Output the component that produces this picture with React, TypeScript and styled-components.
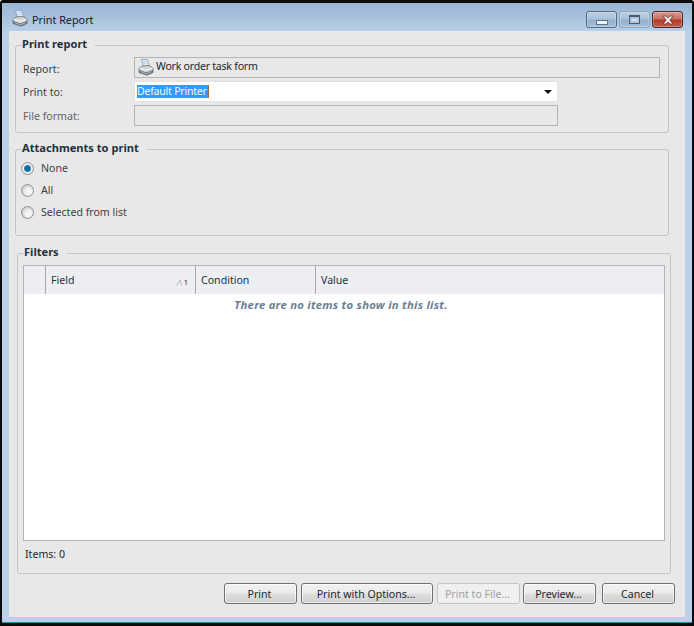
import React from 'react';
import styled, { createGlobalStyle } from 'styled-components';

const Reset = createGlobalStyle`
  html, body {
    margin: 0;
    padding: 0;
    background: #ffffff;
  }
  * { box-sizing: border-box; }
`;

const font = `"Noto Sans", "DejaVu Sans", sans-serif`;

// Window chrome

const WindowFrame = styled.div`
  width: 694px;
  height: 626px;
  border: 2px solid #0a0a0a;
  border-top-width: 3px;
  border-bottom-width: 3px;
  border-radius: 3px 3px 0 0;
  background: #b9d1ea;
  box-shadow: inset 0 -1px 0 #2b8c9c;
  display: flex;
  flex-direction: column;
  font-family: ${font};
  font-size: 10.6px;
  color: #1c2733;
  overflow: hidden;
`;

const TitleBar = styled.header`
  height: 28px;
  flex: none;
  display: flex;
  align-items: center;
  padding: 3px 9px 0 10px;
  background: linear-gradient(180deg, #9ab6d3 0%, #a9c3de 55%, #b7d0e9 100%);
`;

const TitleText = styled.span`
  margin-left: 4px;
  padding-top: 1px;
  font-size: 10.8px;
  color: #10181f;
`;

const CaptionButtons = styled.div`
  margin-left: auto;
  margin-top: 2px;
  display: flex;
  gap: 2px;
`;

const CaptionButton = styled.div<{ $close?: boolean; $faded?: boolean }>`
  width: 31px;
  height: 17px;
  display: flex;
  align-items: center;
  justify-content: center;
  border: 1px solid ${p => (p.$close ? '#4f2a2a' : p.$faded ? '#8ea5bd' : '#55687f')};
  border-radius: 3px;
  box-shadow: inset 0 0 0 1px rgba(255, 255, 255, 0.25);
  background: ${p =>
    p.$close
      ? 'linear-gradient(180deg, #d89a8f 0%, #c8705f 45%, #ae3a2a 55%, #c4604f 100%)'
      : 'linear-gradient(180deg, #bccfe2 0%, #a9c2db 45%, #94b0cd 55%, #a5bfd9 100%)'};
`;

const MinGlyph = styled.div`
  width: 12px;
  height: 5px;
  margin-top: 5px;
  background: #eef3f8;
  border: 1px solid #5f7288;
`;

const MaxGlyph = styled.div`
  width: 11px;
  height: 9px;
  border: 1px solid #4a5a6c;
  border-top-width: 2px;
  background: #b0c6dc;
  display: flex;
  align-items: center;
  justify-content: center;
  &::after {
    content: '';
    width: 5px;
    height: 2px;
    background: #d6e1ec;
  }
`;

const ClientArea = styled.main`
  width: 676px;
  height: 586px;
  margin-left: 7px;
  background: #e8e8e8;
  display: flex;
  flex-direction: column;
`;

// Group boxes

const Group = styled.fieldset<{ $height: number; $top: number; $left?: number }>`
  width: 654px;
  height: ${p => p.$height}px;
  margin: ${p => p.$top}px 0 0 ${p => p.$left ?? 6}px;
  padding: 0 0 0 6px;
  border: 1px solid #c4c4c4;
  border-radius: 3px;
  min-width: 0;
  display: flex;
  flex-direction: column;
`;

const GroupTitle = styled.legend`
  padding: 0 8px 2px 0;
  margin-left: 0;
  font-size: 11.1px;
  line-height: 12px;
  font-weight: 700;
  color: #243240;
`;

const FormRow = styled.div<{ $top: number }>`
  display: flex;
  align-items: center;
  margin-top: ${p => p.$top}px;
  height: 21px;
`;

const FieldLabel = styled.label<{ $muted?: boolean; $low?: boolean }>`
  width: 112px;
  flex: none;
  padding-left: 1px;
  padding-top: ${p => (p.$low ? 2 : 0)}px;
  color: ${p => (p.$muted ? '#5f6469' : '#3a4249')};
`;

const ReadOnlyField = styled.div<{ $width: number }>`
  width: ${p => p.$width}px;
  height: 21px;
  display: flex;
  align-items: center;
  gap: 2px;
  padding-left: 3px;
  border: 1px solid #b4b4b4;
  background: #e8e8e8;
  color: #1c2733;
`;

const ReportName = styled.span`
  margin-top: -3px;
  letter-spacing: -0.25px;
`;

const SelectField = styled.div`
  width: 424px;
  height: 21px;
  display: flex;
  align-items: center;
  padding: 0 5px 0 2px;
  background: #ffffff;
  border: 1px solid #dfe3e8;
`;

const SelectedValue = styled.span`
  background: #3399ff;
  color: #f4f9ff;
  line-height: 13px;
  letter-spacing: -0.25px;
  padding-right: 1px;
  border-right: 1px solid #b06a30;
`;

const ArrowDown = styled.div`
  margin-left: auto;
  width: 0;
  height: 0;
  border-left: 4px solid transparent;
  border-right: 4px solid transparent;
  border-top: 4px solid #111111;
`;

const RadioRow = styled.div<{ $top: number }>`
  display: flex;
  align-items: center;
  gap: 7px;
  height: 14px;
  margin-top: ${p => p.$top}px;
  color: #3a4249;
`;

const RadioDot = styled.div<{ $checked?: boolean }>`
  width: 13px;
  height: 13px;
  margin-left: -1px;
  border-radius: 50%;
  border: 1px solid #8f9499;
  background: ${p =>
    p.$checked
      ? 'radial-gradient(circle, #0d6fa3 0 2.6px, #3f93bf 3.2px, #f0f0f0 4px, #dcdcdc 100%)'
      : 'radial-gradient(circle at 60% 60%, #f4f4f4 0 3px, #d2d2d2 6px)'};
`;

// Filter list

const ListBox = styled.div`
  width: 642px;
  height: 276px;
  margin: 5px 0 0 -1px;
  flex: none;
  border: 1px solid #b4b4b4;
  background: #ffffff;
  display: flex;
  flex-direction: column;
`;

const ListHeader = styled.div`
  height: 28px;
  flex: none;
  display: flex;
  background: #eceef2;
  color: #243240;
`;

const HeaderCell = styled.div<{ $width?: number }>`
  width: ${p => (p.$width ? `${p.$width}px` : 'auto')};
  flex: ${p => (p.$width ? 'none' : '1')};
  display: flex;
  align-items: center;
  padding-left: 5px;
  border-right: ${p => (p.$width ? '1px solid #a8a8a8' : 'none')};
`;

const SortMark = styled.span`
  margin-left: auto;
  margin-right: 7px;
  padding-top: 3px;
  display: flex;
  align-items: flex-end;
  gap: 2px;
  font-size: 7.5px;
  line-height: 8px;
  color: #3a2030;
`;

const EmptyNote = styled.div`
  margin-top: 3px;
  padding-right: 6px;
  text-align: center;
  font-size: 11.3px;
  line-height: 15px;
  letter-spacing: 0.25px;
  font-weight: 700;
  font-style: italic;
  color: #6d7f95;
`;

const ItemCount = styled.div`
  margin: 6px 0 0 1px;
  line-height: 14px;
`;

// Footer buttons

const ButtonBar = styled.footer`
  display: flex;
  margin: 9px 0 0 215px;
`;

const DialogButton = styled.button<{ $width: number; $gap?: number }>`
  width: ${p => p.$width}px;
  height: 21px;
  margin-left: ${p => p.$gap ?? 0}px;
  padding: 0 2px 0 0;
  font-family: ${font};
  font-size: 10.6px;
  color: #1c2733;
  border: 1px solid #707070;
  border-radius: 3px;
  box-shadow: inset 0 0 0 1px rgba(255, 255, 255, 0.65);
  background: linear-gradient(180deg, #f2f2f2 0%, #ebebeb 45%, #dddddd 55%, #cfcfcf 100%);
  &:disabled {
    color: #a0a0a0;
    border-color: #c4c4c4;
    box-shadow: none;
    background: #f0f0f0;
  }
`;

const PrinterIcon: React.FC = () => (
  <svg width="16" height="17" viewBox="0 0 16 17">
    <path d="M3.5 0.5 L9.5 0.5 L11.5 7 L5.5 8 Z" fill="#e6effa" stroke="#7d9cc4" strokeWidth="0.8" />
    <path d="M5 2.5 L9 2.2 M5.5 4.5 L9.5 4.2" stroke="#a9c0dd" strokeWidth="0.7" />
    <path d="M1 9 L5 6.8 L11 6.4 L15 9 L15 13.5 L9 16.2 L1 13.5 Z" fill="#d0d3d6" stroke="#6d7278" strokeWidth="0.8" />
    <path d="M1.5 9 L8.5 11.2 L14.5 9" fill="none" stroke="#f4f5f6" strokeWidth="1.2" />
    <path d="M1 11 L8.5 13.4 L15 11 L15 13.5 L9 16.2 L1 13.5 Z" fill="#666c73" />
    <path d="M2.5 12.6 L8.5 14.8 L13.5 12.8" fill="none" stroke="#c8cbce" strokeWidth="0.8" />
  </svg>
);

const App: React.FC = () => {
  return (
    <>
      <Reset />
      <WindowFrame>
        <TitleBar>
          <PrinterIcon />
          <TitleText>Print Report</TitleText>
          <CaptionButtons>
            <CaptionButton><MinGlyph /></CaptionButton>
            <CaptionButton $faded><MaxGlyph /></CaptionButton>
            <CaptionButton $close>
              <svg width="14" height="10" viewBox="0 0 14 10">
                <path d="M2 1 L5 1 L7 3 L9 1 L12 1 L8.8 5 L12 9 L9 9 L7 7 L5 9 L2 9 L5.2 5 Z" fill="#f1ece9" stroke="#5c3029" strokeWidth="0.7" />
              </svg>
            </CaptionButton>
          </CaptionButtons>
        </TitleBar>
        <ClientArea>
          <Group $height={95} $top={7}>
            <GroupTitle>Print report</GroupTitle>
            <FormRow $top={5}>
              <FieldLabel $low>Report:</FieldLabel>
              <ReadOnlyField $width={526}>
                <PrinterIcon />
                <ReportName>Work order task form</ReportName>
              </ReadOnlyField>
            </FormRow>
            <FormRow $top={3}>
              <FieldLabel>Print to:</FieldLabel>
              <SelectField>
                <SelectedValue>Default Printer</SelectedValue>
                <ArrowDown />
              </SelectField>
            </FormRow>
            <FormRow $top={3}>
              <FieldLabel $muted>File format:</FieldLabel>
              <ReadOnlyField $width={424} />
            </FormRow>
          </Group>

          <Group $height={94} $top={9}>
            <GroupTitle>Attachments to print</GroupTitle>
            <RadioRow $top={5}><RadioDot $checked />None</RadioRow>
            <RadioRow $top={8}><RadioDot />All</RadioRow>
            <RadioRow $top={8}><RadioDot />Selected from list</RadioRow>
          </Group>

          <Group $height={328} $top={10} $left={8}>
            <GroupTitle>Filters</GroupTitle>
            <ListBox>
              <ListHeader>
                <HeaderCell $width={22} />
                <HeaderCell $width={150}>
                  Field
                  <SortMark>
                    <svg width="6" height="7" viewBox="0 0 6 7">
                      <path d="M0.5 6.5 L4 1 L5.5 6.5" fill="none" stroke="#b8b8b8" />
                    </svg>
                    1
                  </SortMark>
                </HeaderCell>
                <HeaderCell $width={120}>Condition</HeaderCell>
                <HeaderCell>Value</HeaderCell>
              </ListHeader>
              <EmptyNote>There are no items to show in this list.</EmptyNote>
            </ListBox>
            <ItemCount>Items: 0</ItemCount>
          </Group>

          <ButtonBar>
            <DialogButton $width={73}>Print</DialogButton>
            <DialogButton $width={132} $gap={4}>Print with Options...</DialogButton>
            <DialogButton $width={83} $gap={4} disabled>Print to File...</DialogButton>
            <DialogButton $width={73} $gap={3}>Preview...</DialogButton>
            <DialogButton $width={73} $gap={6}>Cancel</DialogButton>
          </ButtonBar>
        </ClientArea>
      </WindowFrame>
    </>
  );
};

export default App;
